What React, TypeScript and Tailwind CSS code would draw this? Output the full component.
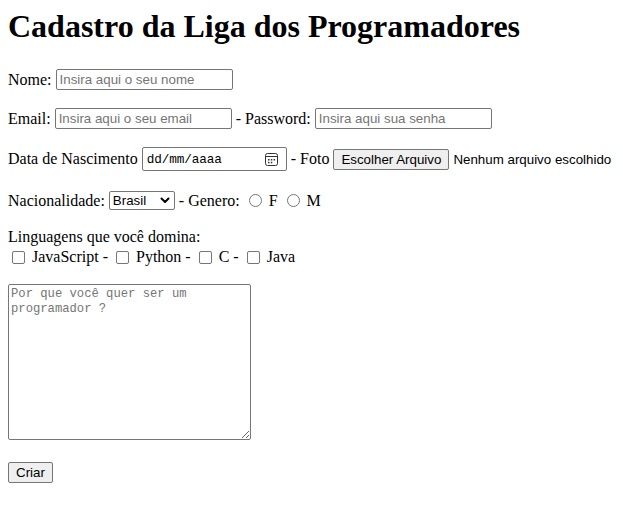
const controlFont = "font-['Liberation_Sans',Arial,sans-serif] text-[13.33px]";

function TextBox({ placeholder, type = "text" }: { placeholder: string; type?: string }) {
  return (
    <input
      type={type}
      placeholder={placeholder}
      className={`${controlFont} w-[177px] h-[21px] px-[3px] leading-[15px] border border-[#767676] rounded-[2px] bg-white text-black placeholder:text-[#757575] outline-none`}
    />
  );
}

function Radio() {
  return (
    <span className="ml-[5px] mr-[3px] w-[13px] h-[13px] rounded-full border border-[#767676] bg-white inline-block" />
  );
}

function Check() {
  return (
    <span className="ml-[4px] mr-[3px] mt-[1px] w-[13px] h-[13px] rounded-[2px] border border-[#767676] bg-white inline-block" />
  );
}

export default function App() {
  return (
    <div className="min-h-[523px] bg-white text-black p-2 font-['Liberation_Serif','Times_New_Roman',serif] text-base leading-[normal]">
      <h1 className="text-[32px] font-bold leading-[37px]">Cadastro da Liga dos Programadores</h1>

      <div className="mt-[24px] h-[21px] flex items-center">
        <span className="whitespace-pre">Nome: </span>
        <TextBox placeholder="Insira aqui o seu nome" />
      </div>

      <div className="mt-[18px] h-[21px] flex items-center">
        <span className="whitespace-pre">Email: </span>
        <TextBox placeholder="Insira aqui o seu email" type="email" />
        <span className="whitespace-pre"> - Password: </span>
        <TextBox placeholder="Insira aqui sua senha" type="password" />
      </div>

      <div className="mt-[18px] h-[24px] flex items-center">
        <span className="whitespace-pre">Data de Nascimento </span>
        <span className="w-[145px] h-[24px] flex items-center justify-between pl-[4px] pr-[8px] border border-[#767676] rounded-[2px] bg-white">
          <span className="font-['Liberation_Mono',monospace] text-[12.7px] tracking-[-0.1px]">dd/mm/aaaa</span>
          <svg width="13" height="13" viewBox="0 0 13 13" fill="none" stroke="#333" strokeWidth="1">
            <rect x="0.5" y="0.5" width="12" height="12" rx="2" />
            <line x1="0.5" y1="3.5" x2="12.5" y2="3.5" />
            <g fill="#333" stroke="none">
              <rect x="3" y="6" width="1.5" height="1.5" />
              <rect x="5.8" y="6" width="1.5" height="1.5" />
              <rect x="8.6" y="6" width="1.5" height="1.5" />
              <rect x="3" y="8.8" width="1.5" height="1.5" />
              <rect x="5.8" y="8.8" width="1.5" height="1.5" />
            </g>
          </svg>
        </span>
        <span className="whitespace-pre"> - Foto </span>
        <button className={`${controlFont} h-[21px] w-[116px] px-[6px] leading-[15px] border border-[#767676] rounded-[2px] bg-[#efefef] text-black`}>
          Escolher Arquivo
        </button>
        <span className={`${controlFont} ml-[4px]`}>Nenhum arquivo escolhido</span>
      </div>

      <div className="mt-[20px] h-[19px] flex items-center">
        <span className="whitespace-pre">Nacionalidade: </span>
        <span className={`${controlFont} w-[66px] h-[19px] flex items-center justify-between pl-[3px] pr-[4px] border border-[#767676] rounded-[2px] bg-white`}>
          <span className="leading-[15px]">Brasil</span>
          <svg width="10" height="7" viewBox="0 0 10 7" fill="none" stroke="#000" strokeWidth="2" strokeLinecap="round" strokeLinejoin="round">
            <polyline points="1.5,1.5 5,5 8.5,1.5" />
          </svg>
        </span>
        <span className="whitespace-pre"> - Genero: </span>
        <Radio />
        <span className="whitespace-pre"> F </span>
        <Radio />
        <span className="whitespace-pre"> M</span>
      </div>

      <div className="mt-[18px] leading-[18px]">Linguagens que você domina:</div>
      <div className="mt-[1px] h-[20px] flex items-center">
        <Check />
        <span className="whitespace-pre"> JavaScript - </span>
        <Check />
        <span className="whitespace-pre"> Python - </span>
        <Check />
        <span className="whitespace-pre"> C - </span>
        <Check />
        <span className="whitespace-pre"> Java</span>
      </div>

      <textarea
        placeholder="Por que você quer ser um programador ?"
        className="block mt-[17px] w-[243px] h-[156px] p-[2px] font-['Liberation_Mono',monospace] text-[12.2px] leading-[15px] border border-[#767676] rounded-[2px] bg-white placeholder:text-[#757575] outline-none resize"
      />

      <button className={`${controlFont} block mt-[22px] h-[21px] w-[45px] px-[6px] leading-[15px] border border-[#767676] rounded-[2px] bg-[#efefef] text-black`}>
        Criar
      </button>
    </div>
  );
}
